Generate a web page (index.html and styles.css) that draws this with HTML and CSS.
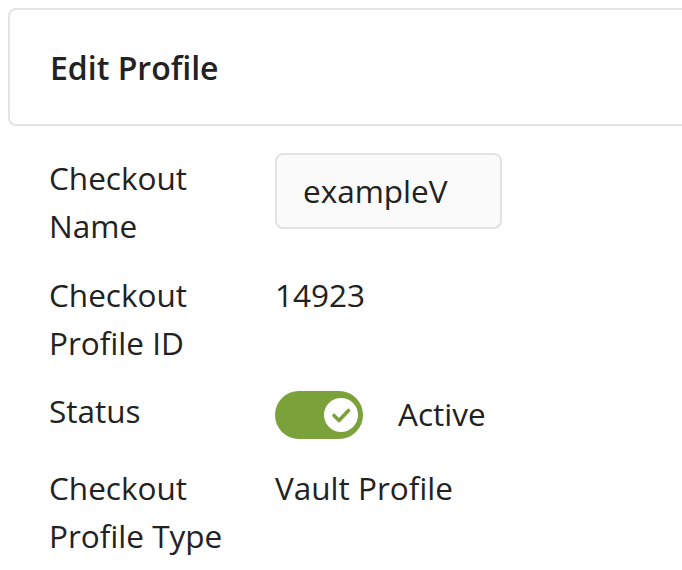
FILE: index.html
```html
<!DOCTYPE html>
<html>
<head>
<meta charset="utf-8">
<link rel="stylesheet" href="styles.css">
</head>
<body>
<div class="card">
  <h2 class="title">Edit Profile</h2>
</div>
<div class="form">
  <div class="row row-name">
    <div class="label">Checkout<br>Name</div>
    <div class="value"><div class="input">exampleV</div></div>
  </div>
  <div class="row row-id">
    <div class="label">Checkout<br>Profile ID</div>
    <div class="value">14923</div>
  </div>
  <div class="row row-status">
    <div class="label">Status</div>
    <div class="value status">
      <span class="toggle">
        <span class="knob">
          <svg viewBox="0 0 34 34" width="34" height="34"><circle cx="17" cy="17" r="17" fill="#fff"/><path d="M10 17.5 L15 22.5 L24.5 12.5" fill="none" stroke="#7ba23a" stroke-width="3.6" stroke-linecap="round" stroke-linejoin="round"/></svg>
        </span>
      </span>
      <span class="status-text">Active</span>
    </div>
  </div>
  <div class="row row-type">
    <div class="label">Checkout<br>Profile Type</div>
    <div class="value">Vault Profile</div>
  </div>
</div>
</body>
</html>
```
FILE: styles.css
```css
html, body {
  margin: 0;
  padding: 0;
  background: #fff;
}
body {
  padding: 8px 0 0 8px;
  font-family: "Open Sans", "Noto Sans", sans-serif;
  color: #222;
  overflow: hidden;
}
.card {
  border: 2px solid #e4e4e4;
  border-right: none;
  border-radius: 8px 0 0 8px;
  display: flex;
  align-items: center;
  padding-left: 40px;
  box-sizing: border-box;
  height: 118px;
}
.title {
  margin: 0;
  font-size: 32px;
  font-weight: 600;
  color: #222;
}
.form {
  padding-left: 41px;
  padding-top: 28px;
}
.row {
  display: flex;
  font-size: 31.5px;
  line-height: 48px;
}
.label {
  width: 226px;
  flex: none;
}
.value {
  flex: 1;
}
.row-name { margin-bottom: 21px; }
.row-id { margin-bottom: 20px; }
.row-status { margin-bottom: 25px; }
.input {
  width: 227px;
  height: 76px;
  box-sizing: border-box;
  border: 2px solid #e2e2e2;
  border-radius: 8px;
  background: #fafafa;
  padding-left: 26px;
  line-height: 72px;
  margin-top: -1px;
}
.status {
  display: flex;
  align-items: center;
}
.toggle {
  width: 88px;
  height: 48px;
  border-radius: 24px;
  background: #7ba23a;
  display: flex;
  align-items: center;
  justify-content: flex-end;
  padding-right: 5px;
  box-sizing: border-box;
  margin-top: 4px;
}
.knob {
  width: 34px;
  height: 34px;
  display: block;
}
.knob svg { display: block; }
.status-text {
  margin-left: 35px;
  margin-top: 2px;
}
```
